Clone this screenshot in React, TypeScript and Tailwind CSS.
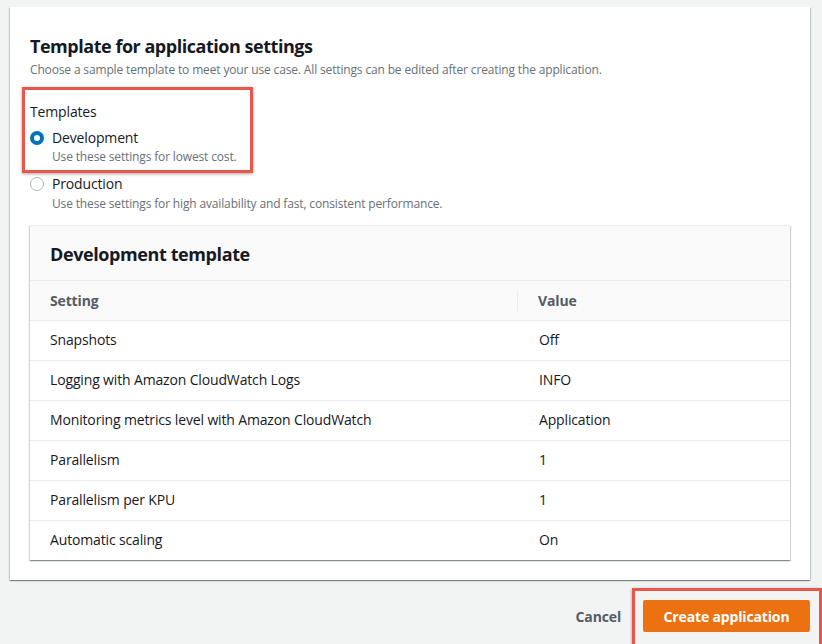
import React from "react";

const Rows = [
  { Setting: "Snapshots", Value: "Off" },
  { Setting: "Logging with Amazon CloudWatch Logs", Value: "INFO" },
  { Setting: "Monitoring metrics level with Amazon CloudWatch", Value: "Application" },
  { Setting: "Parallelism", Value: "1" },
  { Setting: "Parallelism per KPU", Value: "1" },
  { Setting: "Automatic scaling", Value: "On" },
];

function Radio({ Checked }: { Checked: boolean }) {
  return Checked ? (
    <span className="w-[14px] h-[14px] rounded-full bg-[#0073bb] flex items-center justify-center shrink-0">
      <span className="w-[6px] h-[6px] rounded-full bg-white" />
    </span>
  ) : (
    <span className="w-[14px] h-[14px] rounded-full border-[1.5px] border-[#aab7b8] bg-white shrink-0" />
  );
}

export default function App() {
  return (
    <div
      className="relative w-[822px] h-[644px] bg-[#f2f3f3] overflow-hidden pl-[10px] pt-[7px] text-[#16191f] tracking-[-0.15px]"
      style={{ fontFamily: '"Open Sans", "Noto Sans", Arial, sans-serif' }}
    >
      <div className="w-[800px] bg-white px-[20px] pt-[28px] pb-[20px] shadow-[0_1px_1px_0_rgba(0,28,36,0.3),1px_1px_1px_0_rgba(0,28,36,0.15),-1px_1px_1px_0_rgba(0,28,36,0.15)]">
        <h2 className="text-[18px] leading-[22px] font-bold tracking-[-0.47px]">Template for application settings</h2>
        <p className="mt-[5px] text-[12px] leading-[16px] text-[#687078]">
          Choose a sample template to meet your use case. All settings can be edited after creating the application.
        </p>

        <div className="mt-[24px] text-[14px] leading-[20px]">Templates</div>

        <div className="mt-[6px] flex items-center gap-[8px] text-[14px] leading-[20px]">
          <Radio Checked={true} />
          <span>Development</span>
        </div>
        <div className="ml-[22px] mt-[1px] text-[12px] leading-[16px] text-[#687078]">Use these settings for lowest cost.</div>

        <div className="mt-[9px] flex items-center gap-[8px] text-[14px] leading-[20px]">
          <Radio Checked={false} />
          <span>Production</span>
        </div>
        <div className="ml-[22px] mt-[2px] text-[12px] leading-[16px] text-[#687078]">
          Use these settings for high availability and fast, consistent performance.
        </div>

        <div className="mt-[13px] bg-white border-t border-[#eaeded] shadow-[0_1px_1px_0_rgba(0,28,36,0.3),1px_1px_1px_0_rgba(0,28,36,0.15),-1px_1px_1px_0_rgba(0,28,36,0.15)]">
          <div className="h-[54px] bg-[#fafafa] px-[20px] flex items-center">
            <h3 className="text-[18px] leading-[22px] font-bold tracking-[-0.4px] pt-[1px]">Development template</h3>
          </div>
          <div className="h-[40px] bg-[#fafafa] border-t border-[#eaeded] flex items-center text-[14px] font-bold text-[#545b64]">
            <div className="w-[488px] px-[20px] h-[20px] flex items-center border-r border-[#eaeded]">Setting</div>
            <div className="pl-[20px]">Value</div>
          </div>
          {Rows.map((Row) => (
            <div key={Row.Setting} className="h-[40px] border-t border-[#eaeded] flex items-center text-[14px] pb-[2px]">
              <div className="w-[489px] px-[20px]">{Row.Setting}</div>
              <div className="pl-[20px]">{Row.Value}</div>
            </div>
          ))}
        </div>
      </div>

      <div className="w-[800px] mt-[20px] flex items-center justify-end">
        <button className="px-[22px] h-[32px] text-[14px] font-bold text-[#545b64]">Cancel</button>
        <button className="w-[167px] h-[32px] rounded-[2px] bg-[#ec7211] text-white text-[14px] font-bold">
          Create application
        </button>
      </div>

      {/* annotation boxes */}
      <div className="absolute left-[22px] top-[87px] w-[231px] h-[86px] border-[3px] border-[#e8574a] shadow-[0_1px_3px_rgba(0,0,0,0.35)]" />
      <div className="absolute left-[632px] top-[588px] w-[190px] h-[60px] border-[3px] border-[#e8574a] shadow-[0_1px_3px_rgba(0,0,0,0.35)]" />
    </div>
  );
}
